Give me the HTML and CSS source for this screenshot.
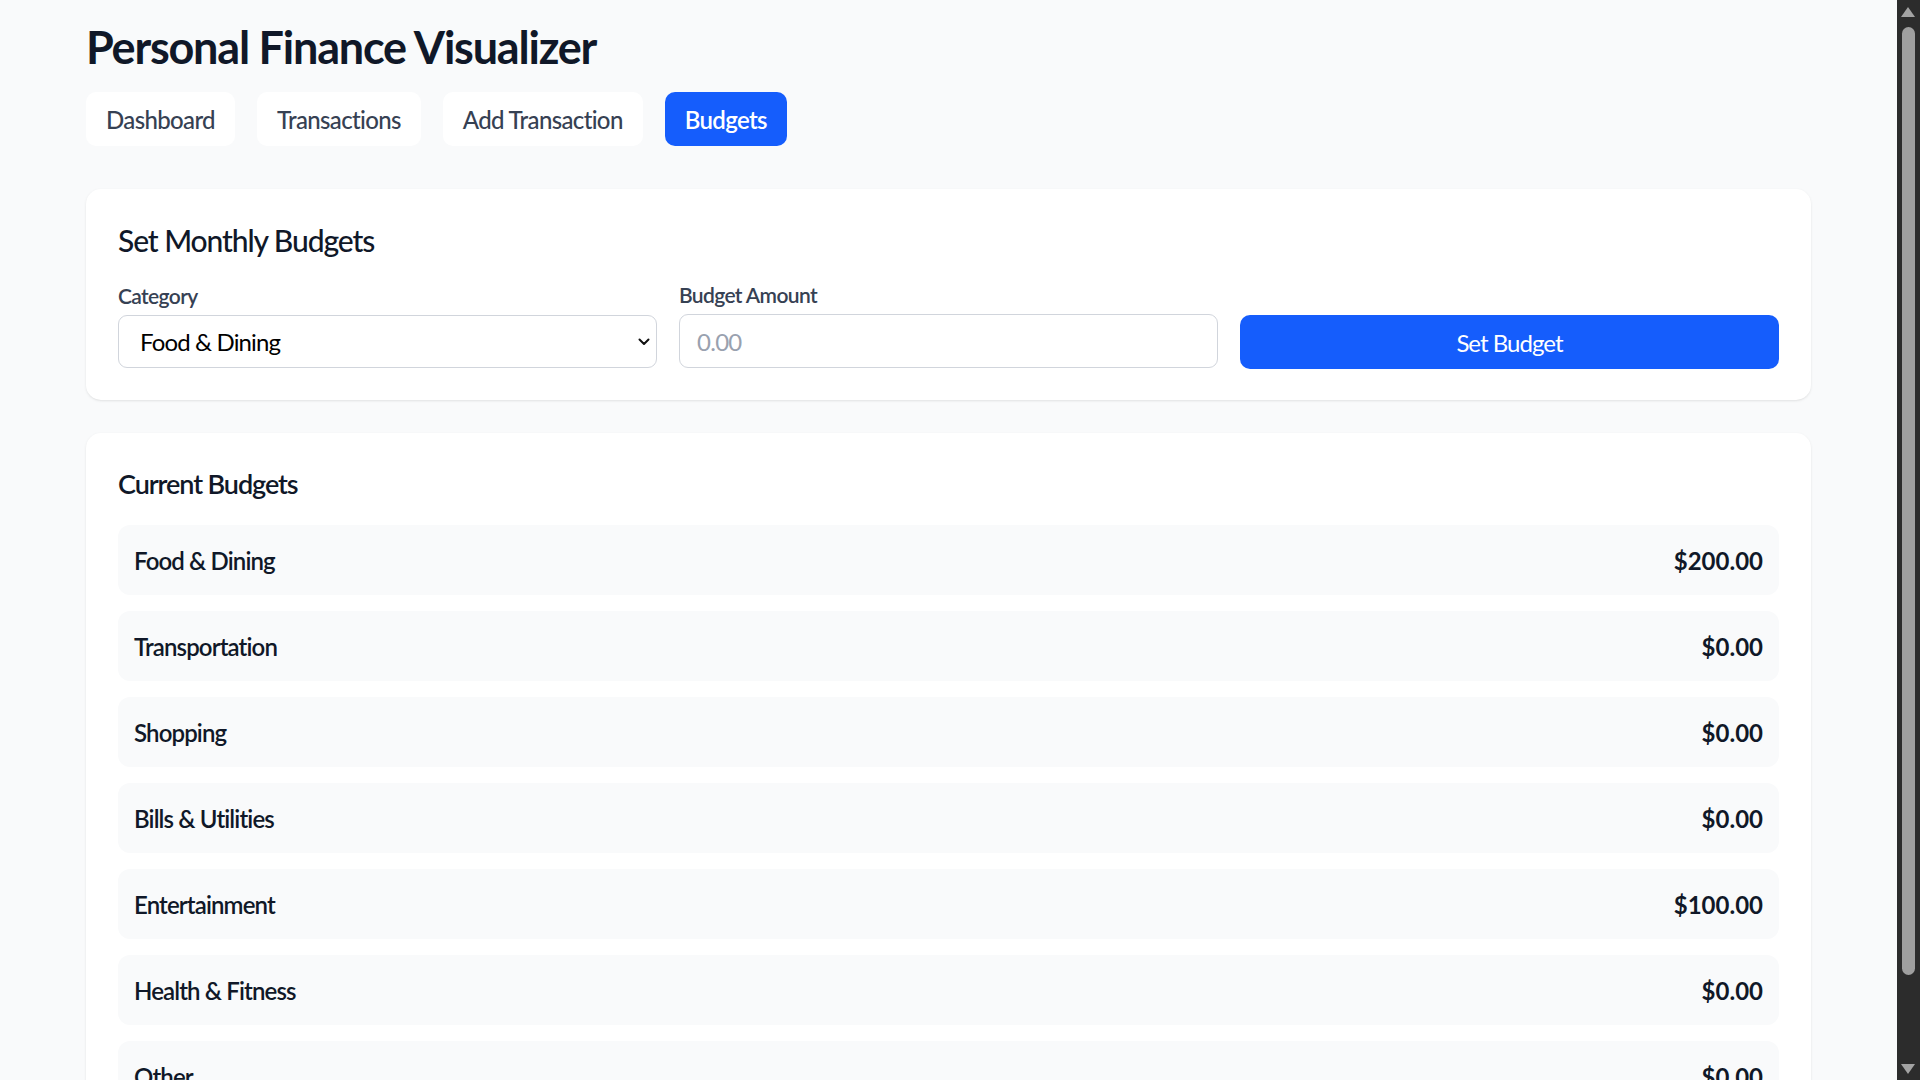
FILE: index.html
```html
<!DOCTYPE html>
<html lang="en">
<head>
<meta charset="utf-8">
<title>Personal Finance Visualizer</title>
<link rel="stylesheet" href="styles.css">
</head>
<body>
<div class="page">
  <h1 class="title">Personal Finance Visualizer</h1>
  <nav class="tabs">
    <button class="tab">Dashboard</button>
    <button class="tab">Transactions</button>
    <button class="tab">Add Transaction</button>
    <button class="tab tab-active">Budgets</button>
  </nav>

  <section class="card card-form">
    <h2 class="card-title">Set Monthly Budgets</h2>
    <div class="form-grid">
      <div class="field">
        <label class="label" for="cat">Category</label>
        <div class="select-wrap">
          <select id="cat" class="select">
            <option>Food &amp; Dining</option>
            <option>Transportation</option>
            <option>Shopping</option>
            <option>Bills &amp; Utilities</option>
            <option>Entertainment</option>
            <option>Health &amp; Fitness</option>
            <option>Other</option>
          </select>
          <svg class="chevron" width="12" height="8" viewBox="0 0 12 8" aria-hidden="true"><path d="M1.5 1.5 L6 6 L10.5 1.5" fill="none" stroke="#111" stroke-width="2" stroke-linecap="round" stroke-linejoin="round"/></svg>
        </div>
      </div>
      <div class="field">
        <label class="label" for="amt">Budget Amount</label>
        <input id="amt" class="input" type="text" placeholder="0.00">
      </div>
      <div class="field field-btn">
        <button class="btn-primary">Set Budget</button>
      </div>
    </div>
  </section>

  <section class="card card-list">
    <h3 class="list-title">Current Budgets</h3>
    <div class="rows">
      <div class="row"><span class="row-name">Food &amp; Dining</span><span class="row-value">$200.00</span></div>
      <div class="row"><span class="row-name">Transportation</span><span class="row-value">$0.00</span></div>
      <div class="row"><span class="row-name">Shopping</span><span class="row-value">$0.00</span></div>
      <div class="row"><span class="row-name">Bills &amp; Utilities</span><span class="row-value">$0.00</span></div>
      <div class="row"><span class="row-name">Entertainment</span><span class="row-value">$100.00</span></div>
      <div class="row"><span class="row-name">Health &amp; Fitness</span><span class="row-value">$0.00</span></div>
      <div class="row"><span class="row-name">Other</span><span class="row-value">$0.00</span></div>
    </div>
  </section>
</div>

<div class="scrollbar" aria-hidden="true">
  <span class="sb-arrow sb-up"></span>
  <span class="sb-thumb"></span>
  <span class="sb-arrow sb-down"></span>
</div>
</body>
</html>
```

FILE: styles.css
```css
html {
  background: #f9fafb;
}

body {
  margin: 0;
  background: #f9fafb;
  font-family: "Lato", "Open Sans", sans-serif;
  color: #101828;
}

.page {
  width: 1725px;
  margin-left: 86px;
  padding: 20px 0 32px;
}

.title {
  margin: 0;
  font-size: 45px;
  line-height: 54px;
  font-weight: 700;
  letter-spacing: -0.027em;
  color: #101828;
}

.tabs {
  display: flex;
  gap: 22px;
  margin-top: 18px;
}

.tab {
  height: 54px;
  padding: 0 20px;
  border: none;
  border-radius: 10px;
  background: #ffffff;
  color: #364153;
  font-family: inherit;
  font-size: 24px;
  font-weight: 500;
  letter-spacing: -0.027em;
  cursor: pointer;
}

.tab-active {
  background: #155dfc;
  color: #ffffff;
  font-weight: 600;
}

.card {
  background: #ffffff;
  border-radius: 15px;
  box-shadow: 0 1px 3px rgba(0, 0, 0, 0.08), 0 1px 2px -1px rgba(0, 0, 0, 0.08);
}

.card-form {
  margin-top: 43px;
  padding: 30px 32px 32px;
}

.card-title {
  margin: 0 0 19px;
  font-size: 30px;
  line-height: 42px;
  font-weight: 500;
  letter-spacing: -0.036em;
  color: #101828;
}

.form-grid {
  display: grid;
  grid-template-columns: 1fr 1fr 1fr;
  gap: 22px;
  align-items: end;
}

.field {
  display: flex;
  flex-direction: column;
}

.label {
  font-size: 21px;
  line-height: 30px;
  font-weight: 600;
  letter-spacing: -0.03em;
  color: #364153;
  margin-bottom: 4px;
}

.select-wrap {
  position: relative;
}

.select {
  width: 100%;
  height: 53px;
  box-sizing: border-box;
  appearance: none;
  -webkit-appearance: none;
  padding: 0 40px 0 21px;
  border: 1.5px solid #d1d5dc;
  border-radius: 9px;
  background: #ffffff;
  font-family: inherit;
  font-size: 24px;
  letter-spacing: -0.036em;
  color: #000000;
}

.chevron {
  position: absolute;
  right: 7px;
  top: 23px;
  pointer-events: none;
}

.input {
  height: 54px;
  box-sizing: border-box;
  padding: 0 17px;
  border: 1.5px solid #d1d5dc;
  border-radius: 9px;
  background: #ffffff;
  font-family: inherit;
  font-size: 24px;
  letter-spacing: -0.03em;
  color: #101828;
}

.input::placeholder {
  color: #99a1af;
}

.btn-primary {
  height: 54px;
  margin-bottom: -1px;
  border: none;
  border-radius: 10px;
  background: #155dfc;
  color: #ffffff;
  font-family: inherit;
  font-size: 24px;
  font-weight: 400;
  letter-spacing: -0.04em;
  cursor: pointer;
}

.card-list {
  margin-top: 33px;
  padding: 31px 32px 32px;
}

.list-title {
  margin: 0 0 21px;
  font-size: 27px;
  line-height: 40px;
  font-weight: 600;
  letter-spacing: -0.04em;
  color: #101828;
}

.rows {
  display: flex;
  flex-direction: column;
  gap: 16px;
}

.row {
  height: 70px;
  padding: 0 16px;
  display: flex;
  align-items: center;
  justify-content: space-between;
  background: #f9fafb;
  border-radius: 12px;
}

.row-name {
  font-size: 24px;
  font-weight: 600;
  letter-spacing: -0.036em;
  color: #101828;
}

.row-value {
  font-size: 24px;
  font-weight: 700;
  color: #101828;
}

/* browser scrollbar (dark), drawn over the page edge */
.scrollbar {
  position: fixed;
  top: 0;
  right: 0;
  width: 23px;
  height: 100vh;
  background: #2c2c2c;
}

.sb-thumb {
  position: absolute;
  top: 27px;
  left: 5px;
  width: 13px;
  height: 948px;
  border-radius: 7px;
  background: #9f9f9f;
}

.sb-arrow {
  position: absolute;
  left: 4px;
  width: 0;
  height: 0;
  border-left: 7.5px solid transparent;
  border-right: 7.5px solid transparent;
}

.sb-up {
  top: 7px;
  border-bottom: 10px solid #a3a3a3;
}

.sb-down {
  bottom: 6px;
  border-top: 10px solid #a3a3a3;
}
```
